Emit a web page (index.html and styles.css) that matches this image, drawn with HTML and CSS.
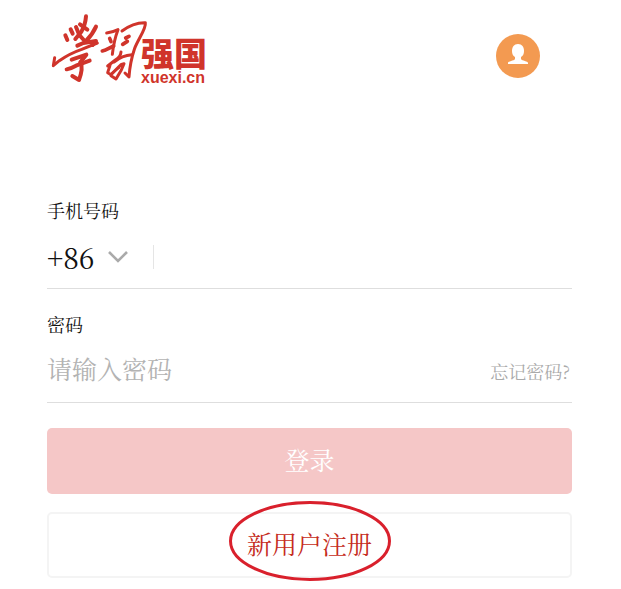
FILE: index.html
```html
<!DOCTYPE html>
<html lang="zh-CN">
<head>
<meta charset="utf-8">
<meta name="viewport" content="width=device-width, initial-scale=1">
<title>学习强国</title>
<link rel="stylesheet" href="styles.css">
</head>
<body>
<main class="page">
  <header class="header">
    <div class="logo">
      <svg class="calligraphy" viewBox="30 21 300 222" fill="none" stroke="#d0342b" stroke-linecap="round" stroke-linejoin="round" aria-hidden="true">
        <g stroke-width="12">
          <path d="M76 91 82 105M92 73 98 86"/>
          <path d="M138 34Q136 60 124 80L106 102"/>
          <path d="M108 66 118 90 134 108"/>
          <path d="M120 58 142 74M168 65Q158 88 138 108"/>
          <path d="M112 122 130 114 168 108 158 120"/>
          <path d="M44 158 40 182 58 167Q90 145 125 133L172 114" stroke-width="9"/>
          <path d="M95 164 139 149 121 172"/>
          <path d="M80 193Q94 190 108 182L149 167"/>
          <path d="M122 172Q130 190 117 225L97 213"/>
        </g>
        <g stroke-width="9">
          <path d="M200 84Q218 82 234 74 222 105 217 148"/>
          <path d="M209 100 213 110M187 138 194 136 221 123" stroke-width="11"/>
          <path d="M246 78Q280 52 316 53C319 70 296 100 284 130Q270 172 267 216L255 204"/>
          <path d="M257 99 267 94M248 118 262 109" stroke-width="11"/>
          <path d="M243 141Q242 155 226 165L203 183"/>
          <path d="M222 171Q246 151 276 149"/>
          <path d="M210 181 203 203 213 209 244 178 252 176 244 195 228 222 213 212"/>
          <path d="M216 204 237 189" stroke-width="6"/>
        </g>
      </svg>
      <div class="wordmark">
        <span class="wordmark-name">强国</span>
        <span class="wordmark-site">xuexi.cn</span>
      </div>
    </div>
    <button class="avatar" type="button" aria-label="用户">
      <svg viewBox="0 0 44 44" aria-hidden="true"><path fill="#fff" d="M22 10c-4 0-6 3-6 7 0 3 1 5 3 6v2c-1 2-7 2-7 4v1h20v-1c0-2-6-2-7-4v-2c2-1 3-3 3-6 0-4-2-7-6-7z"/></svg>
    </button>
  </header>

  <form class="form">
    <label class="label" for="phone">手机号码</label>
    <div class="field">
      <button class="code" type="button">+86
        <svg class="chevron" viewBox="0 0 20 12" aria-hidden="true"><path d="M1 1 10 10 19 1" fill="none" stroke="#aaa" stroke-width="2.6"/></svg>
      </button>
      <input class="input phone" id="phone" type="tel">
    </div>
    <label class="label" for="password">密码</label>
    <div class="field">
      <input class="input" id="password" type="password" placeholder="请输入密码">
      <a class="forgot" href="#">忘记密码?</a>
    </div>
    <button class="button login" type="submit">登录</button>
    <button class="button register" type="button">新用户注册
      <svg class="ring" viewBox="0 0 162 80" aria-hidden="true"><ellipse cx="81" cy="40" rx="79.5" ry="38.5" fill="none" stroke="#d9202c" stroke-width="3"/></svg>
    </button>
  </form>
</main>
</body>
</html>
```
FILE: styles.css
```css
* {
  box-sizing: border-box;
}

body {
  margin: 0;
  background: #fff;
  color: #111;
  font-family: "Noto Serif CJK SC", "Liberation Serif", "Noto Sans CJK SC", serif;
}

button,
input {
  padding: 0;
  border: 0;
  background: none;
  color: inherit;
  font: inherit;
}

.page {
  padding: 12px 49px 12px 47px;
}

.header {
  display: flex;
  align-items: flex-start;
  justify-content: space-between;
  padding: 0 32px 0 3px;
}

.logo {
  display: flex;
}

.calligraphy {
  width: 100px;
  height: 74px;
}

.wordmark {
  display: flex;
  flex-direction: column;
  margin: 24px 0 0 -9px;
  color: #d0342b;
}

.wordmark-name {
  font: 900 33px/33px "Noto Sans CJK SC", sans-serif;
}

.wordmark-site {
  font: 700 16px/17px "Liberation Sans", sans-serif;
}

.avatar {
  width: 44px;
  height: 44px;
  margin-top: 22px;
  border-radius: 50%;
  background: #f39a51;
}

.avatar svg {
  display: block;
}

.form {
  display: flex;
  flex-direction: column;
  margin-top: 112px;
}

.label {
  align-self: flex-start;
  font-size: 18px;
  line-height: 24px;
}

.field {
  display: flex;
  align-items: center;
  height: 67px;
  padding-top: 4px;
  margin-bottom: 23px;
  border-bottom: 1px solid #dedede;
}

.code {
  display: flex;
  align-items: center;
  gap: 13px;
  font-size: 28px;
  line-height: 36px;
}

.chevron {
  width: 20px;
  height: 12px;
}

.input {
  flex: 1;
  min-width: 0;
  height: 40px;
  padding-bottom: 6px;
  font-size: 25px;
  outline: 0;
}

.phone {
  height: 24px;
  margin-left: 25px;
  padding: 0 0 0 16px;
  border-left: 1px solid #e5e5e5;
}

.input::placeholder {
  color: #b3b3b3;
  opacity: 1;
}

.forgot {
  padding-right: 2px;
  color: #aaa;
  font-size: 18px;
  line-height: 24px;
  text-decoration: none;
}

.button {
  position: relative;
  height: 66px;
  padding-bottom: 4px;
  border-radius: 5px;
  font-size: 25px;
  line-height: 36px;
}

.login {
  margin-top: 2px;
  background: #f5c7c7;
  color: #fff;
}

.register {
  margin-top: 18px;
  border: 2px solid #f4f4f4;
  color: #c52b20;
}

.ring {
  position: absolute;
  top: -13px;
  left: 50%;
  width: 162px;
  height: 80px;
  transform: translateX(-50%);
}
```
